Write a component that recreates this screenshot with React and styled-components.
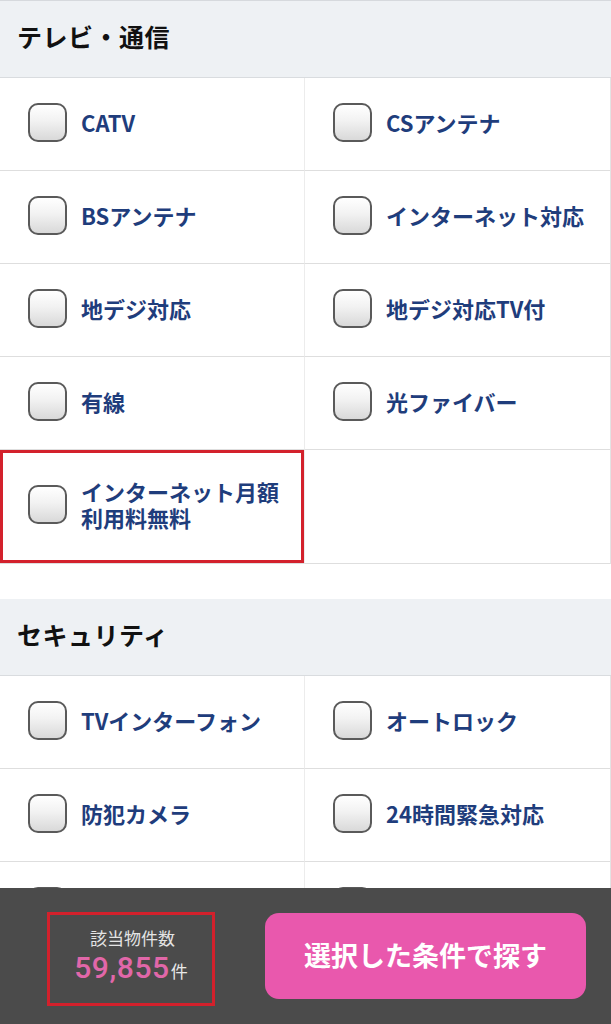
import React from 'react';
import styled, { createGlobalStyle } from 'styled-components';

const GlobalStyle = createGlobalStyle`
    html, body {
        margin: 0;
        padding: 0;
        background: #fff;
    }
    body {
        font-family: "Noto Sans CJK JP", "Noto Sans", sans-serif;
    }
`;

const Page = styled.div`
    width: 611px;
    padding-bottom: 140px;
    border-top: 1px solid #d6d9dd;
`;

const Section = styled.section`
    margin-bottom: ${props => props.gap || 0}px;
`;

const SectionHeader = styled.h2`
    margin: 0;
    height: 77px;
    display: flex;
    align-items: center;
    padding: 0 0 6px 17px;
    box-sizing: border-box;
    background: #eef1f4;
    border-bottom: 1px solid #d9dcdf;
    font-size: 25px;
    font-weight: 700;
    color: #111;
    letter-spacing: 0.5px;
`;

const Grid = styled.div`
    display: grid;
    grid-template-columns: 305px 305px;
    border-right: 1px solid #e3e3e3;
`;

const Cell = styled.label`
    display: flex;
    align-items: center;
    gap: 14px;
    min-height: 93px;
    padding: 23px 0 27px 28px;
    box-sizing: border-box;
    border-bottom: 1px solid #dedede;
    border-right: ${props => props.left ? '1px solid #ececec' : 'none'};
    box-shadow: ${props => props.marked ? 'inset 0 0 0 3px #d3212c' : 'none'};
    cursor: pointer;
`;

const Box = styled.span`
    flex: 0 0 auto;
    width: 35px;
    height: 35px;
    border: 2.5px solid #5a5a5a;
    border-radius: 10px;
    background: linear-gradient(180deg, #ffffff 0%, #f2f2f2 45%, #d9d9d9 100%);
`;

const Label = styled.span`
    padding: 5px 0 6px;
    font-size: 22px;
    font-weight: 700;
    line-height: 26px;
    color: #1f3d7c;
    white-space: pre-line;
`;

const Footer = styled.footer`
    position: fixed;
    left: 0;
    bottom: 0;
    width: 611px;
    height: 136px;
    background: #4b4b4b;
    display: flex;
    align-items: center;
    box-sizing: border-box;
    padding: 0 25px 0 47px;
    gap: 50px;
`;

const CountBox = styled.div`
    width: 168px;
    height: 94px;
    margin-top: 6px;
    box-sizing: border-box;
    border: 3px solid #d3212c;
    display: flex;
    flex-direction: column;
    align-items: center;
    justify-content: center;
    gap: 4px;
    padding-bottom: 6px;
`;

const CountLabel = styled.div`
    font-size: 17px;
    line-height: 22px;
    color: #e4e4e4;
    margin-left: 3px;
`;

const CountValue = styled.div`
    display: flex;
    align-items: baseline;
    line-height: 30px;
`;

const Number = styled.span`
    font-family: Roboto, "Liberation Sans", sans-serif;
    font-size: 30px;
    font-weight: 500;
    letter-spacing: 0.6px;
    color: #e167a9;
`;

const Unit = styled.span`
    font-size: 17px;
    color: #e8e8e8;
    margin-left: 1px;
`;

const SearchButton = styled.button`
    width: 321px;
    height: 86px;
    border: none;
    border-radius: 14px;
    background: #e958ad;
    color: #fff;
    font-family: "Noto Sans CJK JP", sans-serif;
    font-size: 27px;
    font-weight: 700;
    padding: 0 0 4px;
    cursor: pointer;
`;

const sections = [
    {
        title: 'テレビ・通信',
        gap: 35,
        items: ['CATV', 'CSアンテナ', 'BSアンテナ', 'インターネット対応', '地デジ対応', '地デジ対応TV付', '有線', '光ファイバー', 'インターネット月額\n利用料無料', null],
        marked: 8,
    },
    {
        title: 'セキュリティ',
        gap: 0,
        items: ['TVインターフォン', 'オートロック', '防犯カメラ', '24時間緊急対応', '宅配ボックス', 'ディンプルキー'],
    },
];

const App = () => {
    return (
        <>
            <GlobalStyle />
            <Page>
                {sections.map(sec => (
                    <Section key={sec.title} gap={sec.gap}>
                        <SectionHeader>{sec.title}</SectionHeader>
                        <Grid>
                            {sec.items.map((item, i) => (
                                <Cell key={i} left={i % 2 === 0} marked={i === sec.marked}>
                                    {item && <Box />}
                                    {item && <Label>{item}</Label>}
                                </Cell>
                            ))}
                        </Grid>
                    </Section>
                ))}
            </Page>
            <Footer>
                <CountBox>
                    <CountLabel>該当物件数</CountLabel>
                    <CountValue>
                        <Number>59,855</Number>
                        <Unit>件</Unit>
                    </CountValue>
                </CountBox>
                <SearchButton>選択した条件で探す</SearchButton>
            </Footer>
        </>
    );
};

export default App;
